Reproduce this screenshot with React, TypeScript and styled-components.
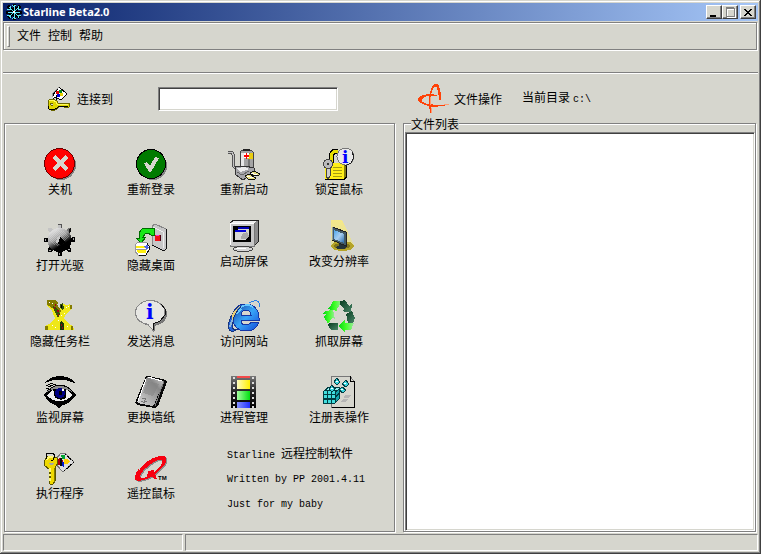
import React from 'react';
import styled, { createGlobalStyle, css } from 'styled-components';

const face = '#d6d6ce';
const shade = '#808080';
const dark = '#404040';
const cjk = '"Noto Sans CJK SC", sans-serif';

const GlobalStyle = createGlobalStyle`
  *, *::before, *::after { box-sizing: border-box; }
  body {
    margin: 0;
    background: ${face};
    color: #000;
    font: 12px/12px ${cjk};
  }
  button, input, select { font: inherit; color: inherit; }
`;

const etched = css`
  border: 1px solid ${shade};
  border-right-color: #fff;
  border-bottom-color: #fff;
`;

const sunken = css`
  ${etched}
  border-radius: 0;
  outline: 0;
  background: #fff;
  box-shadow: inset 1px 1px ${dark}, inset -1px -1px ${face};
`;

const groove = css`
  border: 1px solid ${shade};
  box-shadow: inset 1px 1px #fff, 1px 1px #fff;
`;

const WindowFrame = styled.div`
  display: flex;
  flex-direction: column;
  min-height: 100vh;
  padding: 3px;
  background: ${face};
  box-shadow: inset -1px -1px ${dark}, inset 1px 1px ${face},
    inset -2px -2px ${shade}, inset 2px 2px #fff;
`;

const TitleBar = styled.header`
  display: flex;
  align-items: center;
  height: 18px;
  padding: 0 2px 0 3px;
  background: linear-gradient(to right, #08216b, #a5c6f7);
`;

const Title = styled.h1`
  flex: 1;
  margin: 0 0 0 1px;
  color: #fff;
  font: bold 11px/16px "Noto Sans", sans-serif;
  white-space: nowrap;
`;

const CaptionButton = styled.button<{ $apart?: boolean }>`
  display: grid;
  place-items: center;
  width: 16px;
  height: 14px;
  margin-left: ${(p) => (p.$apart ? 2 : 0)}px;
  padding: 0;
  border: 1px solid #fff;
  border-right-color: ${dark};
  border-bottom-color: ${dark};
  background: ${face};
  box-shadow: inset -1px -1px ${shade};
`;

const MenuBand = styled.nav`
  display: flex;
  align-items: center;
  height: 28px;
  margin: 1px 1px 1px 0;
  padding: 0 3px;
  ${groove}
`;

const Grip = styled.span`
  width: 3px;
  height: 21px;
  margin-right: 4px;
  border: 1px solid #fff;
  border-right-color: ${shade};
  border-bottom-color: ${shade};
`;

const MenuButton = styled.button`
  padding: 0 4px 3px 3px;
  border: 0;
  background: none;
  white-space: nowrap;
`;

const ToolStrip = styled.div`
  height: 23px;
  border-bottom: 1px solid #fff;
  box-shadow: inset 0 -1px ${shade};
`;

const columns = css`
  display: grid;
  grid-template-columns: 392px minmax(200px, 1fr);
  column-gap: 7px;
  padding-left: 1px;
`;

const ConnectRow = styled.div`
  ${columns}
  height: 49px;
`;

const Cell = styled.div<{ $indent: number }>`
  display: flex;
  align-items: center;
  height: 49px;
  padding-left: ${(p) => p.$indent}px;
  white-space: nowrap;
`;

const ConnectLabel = styled.label`
  margin: 0 45px 0 6px;
`;

const AddressInput = styled.input`
  width: 180px;
  height: 24px;
  padding: 2px 4px;
  ${sunken}
`;

const FileCaption = styled.span`
  margin: 0 20px 0 4px;
`;

const Directory = styled.span`
  display: flex;
  align-items: baseline;
  gap: 3px;
`;

const Mono = styled.span`
  font-family: "Liberation Mono", monospace;
  font-size: 10px;
`;

const Main = styled.main`
  ${columns}
  flex: 1;
`;

const ActionPanel = styled.section`
  margin: 0 1px 1px 0;
  padding: 20px 4px 16px 8px;
  ${groove}
`;

const ActionGrid = styled.div`
  display: grid;
  grid-template-columns: 94px 88px 98px 92px;
  grid-auto-rows: minmax(54px, auto);
  row-gap: 22px;
`;

const Action = styled.button<{ $high?: boolean }>`
  display: flex;
  flex-direction: column;
  align-items: center;
  align-self: ${(p) => (p.$high ? 'start' : 'end')};
  gap: 3px;
  height: 50px;
  padding: 0;
  border: 0;
  background: none;
  white-space: nowrap;
`;

const LastAction = styled(Action)`
  align-self: start;
  margin-top: 4px;
`;

const Credits = styled.div`
  grid-column: span 2;
  display: flex;
  flex-direction: column;
  gap: 13px;
  padding: 1px 0 0 32px;
`;

const CreditLine = styled.p`
  height: 12px;
  margin: 0;
  font-family: "Liberation Mono", "Noto Sans CJK SC", monospace;
  font-size: 10px;
  white-space: nowrap;
`;

const Wide = styled.span`
  font-size: 12px;
`;

const FileGroup = styled.fieldset`
  position: relative;
  display: flex;
  min-width: 0;
  margin: 0 2px 1px 0;
  padding: 8px 0 0 1px;
  ${groove}
`;

const Legend = styled.legend`
  position: absolute;
  top: -6px;
  left: 7px;
  padding: 0;
  background: ${face};
`;

const FileList = styled.select`
  flex: 1;
  width: 100%;
  min-height: 200px;
  padding: 2px;
  ${sunken}
  appearance: none;
`;

const StatusBar = styled.footer`
  display: grid;
  grid-template-columns: 180px 1fr;
  gap: 2px;
  height: 17px;
  margin-top: 1px;
`;

const StatusPane = styled.div`
  ${etched}
`;

const Drawing = styled.svg`
  display: block;
  flex: none;
  overflow: visible;
`;

const Svg = ({ w = 32, h = 32, children }: { w?: number; h?: number; children: React.ReactNode }) => (
  <Drawing width={w} height={h} viewBox={`0 0 ${w} ${h}`} aria-hidden="true" shapeRendering="crispEdges">
    {children}
  </Drawing>
);

const Snowflake = () => (
  <Svg w={16} h={16}>
    <path d="M8 0v16M0 8h16M2 2l12 12M14 2L2 14" stroke="#000" strokeWidth="3" />
    <path d="M8 1v14M2 8h12M3 3l10 10M13 3L3 13M6 1l2 2 2-2M6 15l2-2 2 2M1 5h3v-3M15 5h-3v-3M1 11h3v3M15 11h-3v3" stroke="#5de6f5" fill="none" />
    <path d="M7 7h2v2h-2z" fill="#fff" />
  </Svg>
);

const ConnectIcon = () => (
  <Svg w={24} h={25}>
    <path d="M12 1l8 7-6 6-9-4z" fill="#fff" stroke="#000" />
    <path d="M12 1L5 8v3" stroke="#999" fill="none" />
    <path d="M9 5h3v3H9z" fill="#e00000" />
    <path d="M12 4h3v3h-3z" fill="#008a20" />
    <path d="M10 8h3v3h-3z" fill="#0000d8" />
    <path d="M13 7h3v3h-3z" fill="#e8d000" />
    <path d="M7 8l-1 5 3 2M9 9v5" stroke="#000" fill="none" />
    <path d="M7 10l-1 2" stroke="#fff" />
    <path d="M2 14l4-1 4 2 1 2h11l1 2-1 2h-2v-1h-1v1h-2v-1h-5l-2 3-4 2-4-2-1-4z" fill="#e0d800" stroke="#6b6600" />
    <path d="M2 15l4-1 3 2 1 2h11" stroke="#fff860" fill="none" />
    <path d="M1 20l1 3 4 1 4-2 2-2h9" stroke="#000" fill="none" />
    <path d="M3 17h3v3H4z" fill="#6b6600" />
    <path d="M4 18h2v1H4z" fill="#d6d6ce" />
  </Svg>
);

const FileOpsIcon = () => (
  <Svg h={30}>
    <g fill="#ff4208">
      <path d="M12 29c-2-10-1-20 2-26 2-4 5-4 7-1 2 4 2 9 2 14h-2c0-5-1-9-2-12-1-2-3-2-4 1-3 6-3 14-2 24z" />
      <path d="M19 12c-6-1-11 0-14 2-4 3 1 5 5 6 7 1 14 1 22 0-8 3-18 4-25 1-4-1-7-4-7-6 1-4 9-6 19-4z" />
    </g>
    <path d="M12 13v8M13 24v5M26 21l5-1" stroke="#ff9c73" fill="none" />
  </Svg>
);

const ShutdownIcon = () => (
  <Svg>
    <circle cx="17" cy="17" r="15" fill="#848484" />
    <circle cx="15.5" cy="15.5" r="15" fill="#ff0000" stroke="#6b0000" />
    <path d="M8 10l3-3 5 5 5-5 3 3-5 5 5 5-3 3-5-5-5 5-3-3 5-5z" fill={face} />
  </Svg>
);

const LogonIcon = () => (
  <Svg>
    <circle cx="18" cy="18" r="14" fill="#848484" />
    <circle cx="16" cy="16" r="14.5" fill="#007b00" stroke="#000" />
    <path d="M9 15l3-1 3 4 5-9 4 1-8 14h-2z" fill={face} />
  </Svg>
);

const RestartIcon = () => (
  <Svg>
    <path d="M0 4h4l2 5-1 7 1 3 4 2" stroke="#555" strokeWidth="3" fill="none" />
    <path d="M0 4h4l2 5-1 7 1 3 3 1" stroke="#c4c4c4" fill="none" />
    <path d="M12 4l2-2h9l2 2v17H12z" fill="#a4a4a4" stroke="#444" />
    <path d="M13 5h3v15h-3z" fill="#e8e8e8" />
    <path d="M20 5h2v15h-2z" fill="#777" />
    <path d="M22 5h3v6h-5z" fill="#e8cc10" />
    <path d="M16 5h5v5h-5z" fill="#fff" />
    <path d="M15 1h7v2h-7z" fill="#222" />
    <path d="M18 5h1v2h2v2h-2v2h-1V9h-2V7h2z" fill="#f00" />
    <path d="M7 19l10-1 9 2v4l-4 3-7 5-7-5z" fill="#a6a6aa" stroke="#333" />
    <path d="M8 20l9-1 4 2-8 3z" fill="#ececec" />
    <path d="M9 24l5 3 7-4" stroke="#686868" fill="none" />
    <path d="M22 25l4-2 6 3-2 2-5-1zM17 28l4-2 7 4-2 2-6-1z" fill="#e8e080" stroke="#111" />
    <path d="M23 25l6 2M19 28l6 2" stroke="#fff" />
  </Svg>
);

const PadlockIcon = () => (
  <Svg>
    <path d="M8 15V7l3-4h4" stroke="#000" strokeWidth="5" fill="none" />
    <path d="M8 15V7l3-4h4" stroke="#e8e000" strokeWidth="3" fill="none" />
    <path d="M2 15h19l3-3v17l-3 3H2z" fill="#000" />
    <path d="M2 15h19v16H2z" fill="#ffef18" />
    <path d="M21 15l2-2v15l-2 3z" fill="#827c10" />
    <path d="M10 19h9M10 22h9M10 25h9M10 28h9" stroke="#a59c10" />
    <circle cx="22.5" cy="8.5" r="8.5" fill="#e9e9e9" stroke="#777" />
    <path d="M29 4l2 5-3 6-6 3" stroke="#222" fill="none" />
    <text x="19" y="15" fontFamily="DejaVu Serif" fontWeight="bold" fontSize="17" fill="#0000ff">i</text>
    <path d="M4 19h3v9l-2 3-2-3z" fill="#ccc" stroke="#444" />
    <circle cx="5" cy="16" r="4.5" fill="#bbb" stroke="#444" />
    <path d="M4 15h2v2H4z" fill="#333" />
  </Svg>
);

const MineIcon = () => (
  <Svg>
    <defs>
      <linearGradient id="mine" x1="7" y1="4" x2="21" y2="27" gradientUnits="userSpaceOnUse">
        <stop offset=".15" stopColor="#dcdcdc" />
        <stop offset=".45" stopColor="#a0a0a0" />
        <stop offset=".6" stopColor="#4a4a4a" />
        <stop offset=".75" stopColor="#000" />
      </linearGradient>
      <pattern id="mineDots" width="2" height="2" patternUnits="userSpaceOnUse">
        <path d="M0 0h1v1H0zM1 1h1v1H1z" fill="#e8e8e8" />
      </pattern>
    </defs>
    <path d="M14 0h4v5h-4zM4 4h3l4 4-3 3-4-4z" fill="#c4c4c4" />
    <path d="M14 0h4v1h-4zM17 1h1v4h-1z" fill="#555" />
    <path d="M24 4h3v3l-4 4-3-3z" fill="#777" />
    <path d="M26 4h1v3l-3 3z" fill="#111" />
    <path d="M0 14h4v4H0zM28 13h3v5h-4v-3zM4 24l4-3 3 3-4 4H4zM14 27h4v5h-4zM23 21l4 3v4h-3l-4-4z" fill="#000" />
    <circle cx="15.5" cy="16" r="12" fill="url(#mine)" />
    <path d="M5 13l7-7 8 1 5 6-6 5-6 4-5-2z" fill="url(#mineDots)" opacity=".35" />
    <path d="M16 12l2 3 4 3-5 3-4-2z" fill="#000" />
    <path d="M13 13l3-1-1 6-3 1z" fill="#c8c8c8" />
    <path d="M1 15h1v2H1zM29 14h1v2h-1zM5 26h2v1H5zM24 25h2v1h-2zM15 29h1v2h-1z" fill="#aaa" />
  </Svg>
);

const HideDesktopIcon = () => (
  <Svg>
    <path d="M17 2l3-2 11 5v20l-2 2-12-6z" fill="#c8c8c8" stroke="#888" />
    <path d="M31 5v20l-2 2-12-6" stroke="#111" fill="none" />
    <path d="M18 3l10 5v16" stroke="#eee" fill="none" />
    <circle cx="23" cy="14" r="3.5" fill="#ef1018" />
    <path d="M25 11l1 3-1 3" stroke="#500010" fill="none" />
    <path d="M21 11h3v1h-3z" fill="#ff30d8" />
    <path d="M19 4v7h-3l-3-2-3 1-2 3h3l-5 6-5-5h3V9l3-4 4-1 4 1 2-1z" fill="#18e818" stroke="#006b00" />
    <path d="M0 21l3-3 9 1 3 5-4 7H3l-3-4z" fill="#fff" stroke="#999" />
    <path d="M1 22h10l1 2H1zM2 26h9v3H3z" fill="#ffef10" />
    <path d="M12 19l3 5-4 7H4" stroke="#111" fill="none" />
    <path d="M9 22l4-1 1 3-3 1z" fill="#5068e8" />
    <path d="M1 25h11" stroke="#999" />
  </Svg>
);

const ScreenSaverIcon = () => (
  <Svg>
    <path d="M2 3l4-3h24v22l-4 4H2z" fill="#8c8c8c" stroke="#222" />
    <path d="M3 3l3-2h23l-3 2z" fill="#eee" />
    <path d="M2 3h24v23H2z" fill="#c8c8c8" stroke="#777" />
    <path d="M2 3h24M2 3v22" stroke="#fff" />
    <path d="M5 6h18v16H5z" fill="#000" />
    <path d="M10 7h11v8H10z" fill={face} />
    <path d="M10 7h11v2H10z" fill="#0000b5" />
    <path d="M7 10h11v10H7z" fill="#d6d6d6" />
    <path d="M7 10h11v2H7z" fill="#0000d6" />
    <path d="M14 14l5-2 2 4-2 3h-6z" fill="#a7a7a7" />
    <path d="M11 26h7v2h-7z" fill="#555" />
    <ellipse cx="15" cy="29" rx="10" ry="2.5" fill="#d6d6d6" stroke="#444" />
    <path d="M8 28h10" stroke="#fff" />
  </Svg>
);

const ResolutionIcon = () => (
  <Svg>
    <defs>
      <linearGradient id="beam" x2="0" y2="1">
        <stop stopColor="#f5e989" />
        <stop offset="1" stopColor="#dfdba0" />
      </linearGradient>
      <linearGradient id="lcd" x2="1" y2="1">
        <stop stopColor="#4ba6ee" />
        <stop offset=".5" stopColor="#a9cfef" />
        <stop offset="1" stopColor="#286cae" />
      </linearGradient>
    </defs>
    <path d="M8 0h11l12 25H8z" fill="url(#beam)" />
    <ellipse cx="19.5" cy="26" rx="11.5" ry="5" fill="#b5a428" />
    <ellipse cx="19" cy="26" rx="8" ry="3" fill="#81751b" />
    <path d="M16 21l4 2 4 4-3 2h-7l-2-2 4-1z" fill="#25333a" />
    <path d="M9 7l14 5v14L9 20z" fill="#435b67" stroke="#222" />
    <path d="M11 10l10 4v9l-10-4z" fill="url(#lcd)" />
    <path d="M9 7v13" stroke="#91a2a8" />
  </Svg>
);

const TaskbarIcon = () => (
  <Svg>
    <path d="M3 1l6-1 4 2 3 6 3-4 4 1 3-1 1 5-6 7-1 3 4 4 5 3 1 4H1v-4l6-3 4-5-3-7-5-5z" fill="#efe818" />
    <path d="M3 0h9l2 3 3 8-2 6-5-8-7-4z" fill="#847c00" />
    <path d="M9 6l4 2 3 6-2 4-4-8z" fill="#35530c" />
    <path d="M10 7h1v2h-1zM13 10h2v2h-2zM14 14h1v2h-1zM11 4h1v2h-1z" fill="#a50012" />
    <path d="M16 4l3-1 1 5-2 2-2-3z" fill="#35530c" />
    <path d="M17 5h1v3h-1z" fill="#000" />
    <path d="M17 21l3 3v6h-4v-6z" fill="#1c3a08" />
    <path d="M17 24h1v2h-1zM18 27h1v2h-1z" fill="#a50012" />
    <path d="M13 4h3v5l-2-3z" fill={face} />
    <path d="M1 26h3v4H1zM27 26h2v4h-2zM26 5h2v4h-2z" fill="#847c00" />
    <path d="M5 2h1v1H5zM8 3h1v1H8zM22 7h1v1h-1zM24 6h1v1h-1zM17 15h1v1h-1zM14 20h1v1h-1zM8 25h1v1H8zM11 27h1v1h-1zM23 26h1v1h-1zM20 13h1v1h-1z" fill="#fff" />
  </Svg>
);

const MessageIcon = () => (
  <Svg>
    <ellipse cx="17" cy="14" rx="15" ry="12" fill="#777" />
    <path d="M15 25l5 7V24z" fill="#777" />
    <path d="M15.500.5C7 .5.5 6 .5 12.500S6 23 13 24.500l5 6v-6c7-1 12-6 12-12S24 .5 15.500.5z" fill="#e7e7e3" stroke="#888" />
    <path d="M26 4l4 5v6l-5 6-7 3v6" stroke="#111" fill="none" />
    <text x="11" y="19" fontFamily="DejaVu Serif" fontWeight="bold" fontSize="20" fill="#0000ff">i</text>
  </Svg>
);

const BrowserIcon = () => (
  <Svg>
    <defs>
      <linearGradient id="globe" x2="1" y2="1">
        <stop stopColor="#143b9c" />
        <stop offset=".5" stopColor="#37a5f8" />
        <stop offset="1" stopColor="#1147d6" />
      </linearGradient>
    </defs>
    <path d="M31 20H13c0 3 2 5 5 5 2 0 4-1 5-3h8c-2 6-7 9-13 9-8 0-13-5-13-13C5 9 10 4 18 4s13 6 13 14zM13 15h10c0-3-2-5-5-5s-5 2-5 5z" fill="url(#globe)" stroke="#1536a4" />
    <path d="M13 7c3-2 8-3 12 0M9 14c1-3 3-4 4-5" stroke="#65c7ff" strokeWidth="2" fill="none" />
    <path d="M12 6C4 11-1 23 1 29c1 3 5 3 9 0-4 1-6 0-6-3 0-7 4-15 9-19z" fill="#2465d9" stroke="#17347b" />
    <path d="M4 15c2-4 4-7 8-9-3 4-6 8-8 15z" fill="#e8cf78" />
    <path d="M4 20l-2 7" stroke="#8db5d9" strokeWidth="2" />
    <path d="M21 3c5-3 9-3 10 0v4" stroke="#287fe8" fill="none" />
  </Svg>
);

const RecycleIcon = () => (
  <Svg>
    <defs>
      <linearGradient id="leaf">
        <stop stopColor="#00d410" />
        <stop offset=".5" stopColor="#42ff28" />
        <stop offset="1" stopColor="#9de8a0" />
      </linearGradient>
      <linearGradient id="pine" x2="1" y2="1">
        <stop stopColor="#083b20" />
        <stop offset="1" stopColor="#4a8668" />
      </linearGradient>
    </defs>
    <path d="M10 1h9l-5 8v2l-9-2 3-4z" fill="url(#leaf)" />
    <path d="M17 1l5-1 4 6 3-2-1 9-9-2 3-2-5-4z" fill="url(#pine)" />
    <path d="M23 14l6-3 3 7-2 5h-5z" fill="url(#pine)" />
    <path d="M15 26l7-6v3h9l-3 7h-6v2z" fill="url(#leaf)" />
    <path d="M6 23h9v7H8l-3-5z" fill="url(#pine)" />
    <path d="M0 14l2-3 8-1 2 9-3-1-4 6-4-7 2-3z" fill="url(#leaf)" />
  </Svg>
);

const EyeIcon = () => (
  <Svg>
    <path d="M1 7C7-2 23-2 31 6v1C22 3 10 2 1 7z" />
    <path d="M0 19C8 6 22 4 32 19c-5 6-9 10-14 10l-3 3-4-3C7 28 3 24 0 19z" />
    <path d="M1 17C9 8 21 7 30 17 22 11 9 11 1 17z" fill="#8c8c8c" />
    <path d="M3 19c8-9 18-9 26 0-8 8-19 9-26 0z" fill="#eee" />
    <path d="M9 13h13v9l-5 2-6-2z" fill="#000" />
    <circle cx="16" cy="17" r="5" fill="#000084" />
    <path d="M15 15h3v4h-3z" fill="#000" />
    <path d="M18 13h2v2h-2z" fill="#fff" />
    <path d="M2 9l7 3M4 8l7 3M6 7l6 2M2 12l5 2" stroke="#000" />
  </Svg>
);

const WallpaperIcon = () => (
  <Svg>
    <defs>
      <linearGradient id="slab" x1="0" y1="1" x2="1" y2="0">
        <stop stopColor="#ddd" />
        <stop offset=".4" stopColor="#aaa" />
        <stop offset=".7" stopColor="#888" />
        <stop offset="1" stopColor="#d8d8d8" />
      </linearGradient>
    </defs>
    <path d="M11 0h3l17 4 1 2-9 24-3 2L2 29l-2-2z" fill="#080808" />
    <path d="M12 1h2l15 4-1 2-9 22-2 1L3 27l-1-1z" fill="url(#slab)" />
    <path d="M29 5l-9 25" stroke="#777" />
    <path d="M11 3L3 25M13 1l14 4" stroke="#fff" />
    <path d="M13 5l11 3-6 12-10-3z" fill="#828282" opacity=".5" />
    <path d="M7 22l4 1-2 2 3 1M6 25l4 2" stroke="#777" fill="none" />
  </Svg>
);

const ProcessIcon = () => {
  const holes = [1, 6, 11, 16, 21, 26, 30];
  return (
    <Svg>
      <defs>
        <linearGradient id="strip" x2="0" y2="1">
          <stop stopColor="#777" />
          <stop offset=".5" stopColor="#222" />
          <stop offset="1" stopColor="#000" />
        </linearGradient>
        <linearGradient id="yellowFrame"><stop stopColor="#fffcc0" /><stop offset="1" stopColor="#ffef00" /></linearGradient>
        <linearGradient id="greenFrame"><stop stopColor="#a5ffa0" /><stop offset="1" stopColor="#00df10" /></linearGradient>
        <linearGradient id="blueFrame"><stop stopColor="#8490ff" /><stop offset="1" stopColor="#2030ff" /></linearGradient>
      </defs>
      <path d="M3 0h25v32H3z" fill="url(#strip)" />
      <path d="M9 0h13v2H9z" fill="#f34a4a" />
      <path d="M9 4h13v9H9z" fill="url(#yellowFrame)" />
      <path d="M9 15h13v9H9z" fill="url(#greenFrame)" />
      <path d="M9 26h13v6H9z" fill="url(#blueFrame)" />
      {holes.map((y) => <path key={y} d={`M5 ${y}h2v2H5zM24 ${y}h2v2h-2z`} fill="#ddd" />)}
    </Svg>
  );
};

const RegistryIcon = () => (
  <Svg>
    <path d="M8.500.5H27l4.500 5v26h-23z" fill={face} stroke="#777" />
    <path d="M27 0v5h5M31.500 5v26.500H9" stroke="#000" fill="none" />
    <path d="M22 19h6l-2 3h-5zM20 23h5l-2 3h-5z" fill="#b5b5b5" />
    <path d="M0 15l5-4h12v11l-5 6H0z" fill="#003d42" />
    {[15, 19, 24].map((y) => [1, 5, 9].map((x) => <path key={`${x}-${y}`} d={`M${x} ${y}h3v3h-3z`} fill="#42dede" />))}
    <path d="M5 12h3l-2 2H3zM9 12h3l-2 2H7zM13 12h3l-2 2h-3z" fill="#95efef" />
    <path d="M13 16l3-2v3l-3 2zM13 21l3-2v3l-3 3z" fill="#16a5ad" />
    <g fill="#39d6de" stroke="#003d42">
      <path d="M14 2l3 4-3 3-3-3zM23 4l3 4-3 3-4-3zM19 11l4 3-3 3-4-3zM9 9l3 4-3 3-3-3z" />
    </g>
    <path d="M13 5h2v1h-2zM21 7h2v1h-2zM18 13h2v1h-2zM8 12h2v1H8z" fill="#fff" />
  </Svg>
);

const RunIcon = () => (
  <Svg>
    <path d="M12 7l5-6h4l9 9-10 9h-2l-7-8z" fill="#ddd" stroke="#777" />
    <path d="M21 2l9 8-10 9" stroke="#000" fill="none" strokeDasharray="2 1" />
    <path d="M13 7l4-1 2 3-3 4h-3z" fill="#a50010" />
    <path d="M17 3h4v4h-3z" fill="#00a531" />
    <path d="M17 10h3v5l-3-1z" fill="#0018ce" />
    <path d="M20 7h3l3 2-3 3h-3z" fill="#ffce00" />
    <path d="M16 6h2v8h-2z" fill="#080808" />
    <path d="M4 4l4 1 5 1 1 5-3 5v13l-2 3H6l-1-3V17l-4-3-1-5z" fill="#efd900" stroke="#5c5600" />
    <path d="M2 8l3-3h4M6 16v13" stroke="#fff870" strokeWidth="2" fill="none" />
    <path d="M10 16v14" stroke="#847b00" />
    <path d="M5 20h2v2H5zM5 24h2v2H5z" fill="#5c5600" />
    <path d="M4 11h6l-2 2H6z" fill="#a5a5a5" />
    <path d="M2 7V2l3-1h4l2 3-2 4-2 1" stroke="#000" fill="none" />
  </Svg>
);

const RemoteMouseIcon = () => (
  <Svg>
    <path fillRule="evenodd" fill="#8c8c8c" d="M1 26C2 16 18 5 28 5c7 0 5 7-1 13C19 27 6 32 2 29c-1 0-1-1-1-3zM6 25c0 5 11 0 18-7 5-5 6-10 1-9C19 10 7 20 6 25z" />
    <path fillRule="evenodd" fill="#f70010" d="M0 25C1 15 17 4 27 4c7 0 5 7-1 13C18 26 5 31 1 28c-1 0-1-1-1-3zM5 24c0 5 11 0 18-7 5-5 6-10 1-9C18 9 6 19 5 24z" />
    <path d="M13 19l6-1 1 4 2 5h-3l-3-4-4 2z" fill="#f70010" />
    <path d="M17 6C10 10 5 15 4 18" stroke="#d6d6ce" fill="none" />
    <text x="23" y="28" fontFamily="Liberation Sans" fontWeight="bold" fontSize="6" fill="#000">TM</text>
  </Svg>
);

const actions: { label: string; Icon: React.FC; high?: boolean }[] = [
  { label: '关机', Icon: ShutdownIcon },
  { label: '重新登录', Icon: LogonIcon },
  { label: '重新启动', Icon: RestartIcon },
  { label: '锁定鼠标', Icon: PadlockIcon },
  { label: '打开光驱', Icon: MineIcon },
  { label: '隐藏桌面', Icon: HideDesktopIcon },
  { label: '启动屏保', Icon: ScreenSaverIcon, high: true },
  { label: '改变分辨率', Icon: ResolutionIcon, high: true },
  { label: '隐藏任务栏', Icon: TaskbarIcon },
  { label: '发送消息', Icon: MessageIcon },
  { label: '访问网站', Icon: BrowserIcon },
  { label: '抓取屏幕', Icon: RecycleIcon },
  { label: '监视屏幕', Icon: EyeIcon },
  { label: '更换墙纸', Icon: WallpaperIcon },
  { label: '进程管理', Icon: ProcessIcon },
  { label: '注册表操作', Icon: RegistryIcon },
];

const lastActions: { label: string; Icon: React.FC }[] = [
  { label: '执行程序', Icon: RunIcon },
  { label: '遥控鼠标', Icon: RemoteMouseIcon },
];

export default function App() {
  return (
    <WindowFrame>
      <GlobalStyle />
      <TitleBar>
        <Snowflake />
        <Title>Starline Beta2.0</Title>
        <CaptionButton aria-label="Minimize">
          <Svg w={10} h={9}><path d="M1 7h6v2H1z" /></Svg>
        </CaptionButton>
        <CaptionButton aria-label="Maximize" disabled>
          <Svg w={10} h={10}>
            <path d="M2 2h8v8H2z" fill="none" stroke="#fff" />
            <path d="M1 1h8v8H1z" fill="none" stroke={shade} />
            <path d="M1 1h8" stroke={shade} strokeWidth="2" />
          </Svg>
        </CaptionButton>
        <CaptionButton aria-label="Close" $apart>
          <Svg w={8} h={7}>
            <path d="M0 0h2v1h1v1h2V1h1V0h2v1H7v1H6v1H5v1h1v1h1v1h1v1H6V6H5V5H3v1H2v1H0V6h1V5h1V4h1V3H2V2H1V1H0z" />
          </Svg>
        </CaptionButton>
      </TitleBar>
      <MenuBand>
        <Grip />
        <MenuButton>文件</MenuButton>
        <MenuButton>控制</MenuButton>
        <MenuButton>帮助</MenuButton>
      </MenuBand>
      <ToolStrip />
      <ConnectRow>
        <Cell $indent={43}>
          <ConnectIcon />
          <ConnectLabel htmlFor="address">连接到</ConnectLabel>
          <AddressInput id="address" type="text" />
        </Cell>
        <Cell $indent={15}>
          <FileOpsIcon />
          <FileCaption>文件操作</FileCaption>
          <Directory>当前目录<Mono>c:\</Mono></Directory>
        </Cell>
      </ConnectRow>
      <Main>
        <ActionPanel>
          <ActionGrid>
            {actions.map(({ label, Icon, high }) => (
              <Action key={label} $high={high}>
                <Icon />
                {label}
              </Action>
            ))}
            {lastActions.map(({ label, Icon }) => (
              <LastAction key={label}>
                <Icon />
                {label}
              </LastAction>
            ))}
            <Credits>
              <CreditLine>Starline <Wide>远程控制软件</Wide></CreditLine>
              <CreditLine>Written by PP 2001.4.11</CreditLine>
              <CreditLine>Just for my baby</CreditLine>
            </Credits>
          </ActionGrid>
        </ActionPanel>
        <FileGroup>
          <Legend>文件列表</Legend>
          <FileList size={10} aria-label="文件列表" />
        </FileGroup>
      </Main>
      <StatusBar>
        <StatusPane />
        <StatusPane />
      </StatusBar>
    </WindowFrame>
  );
}
